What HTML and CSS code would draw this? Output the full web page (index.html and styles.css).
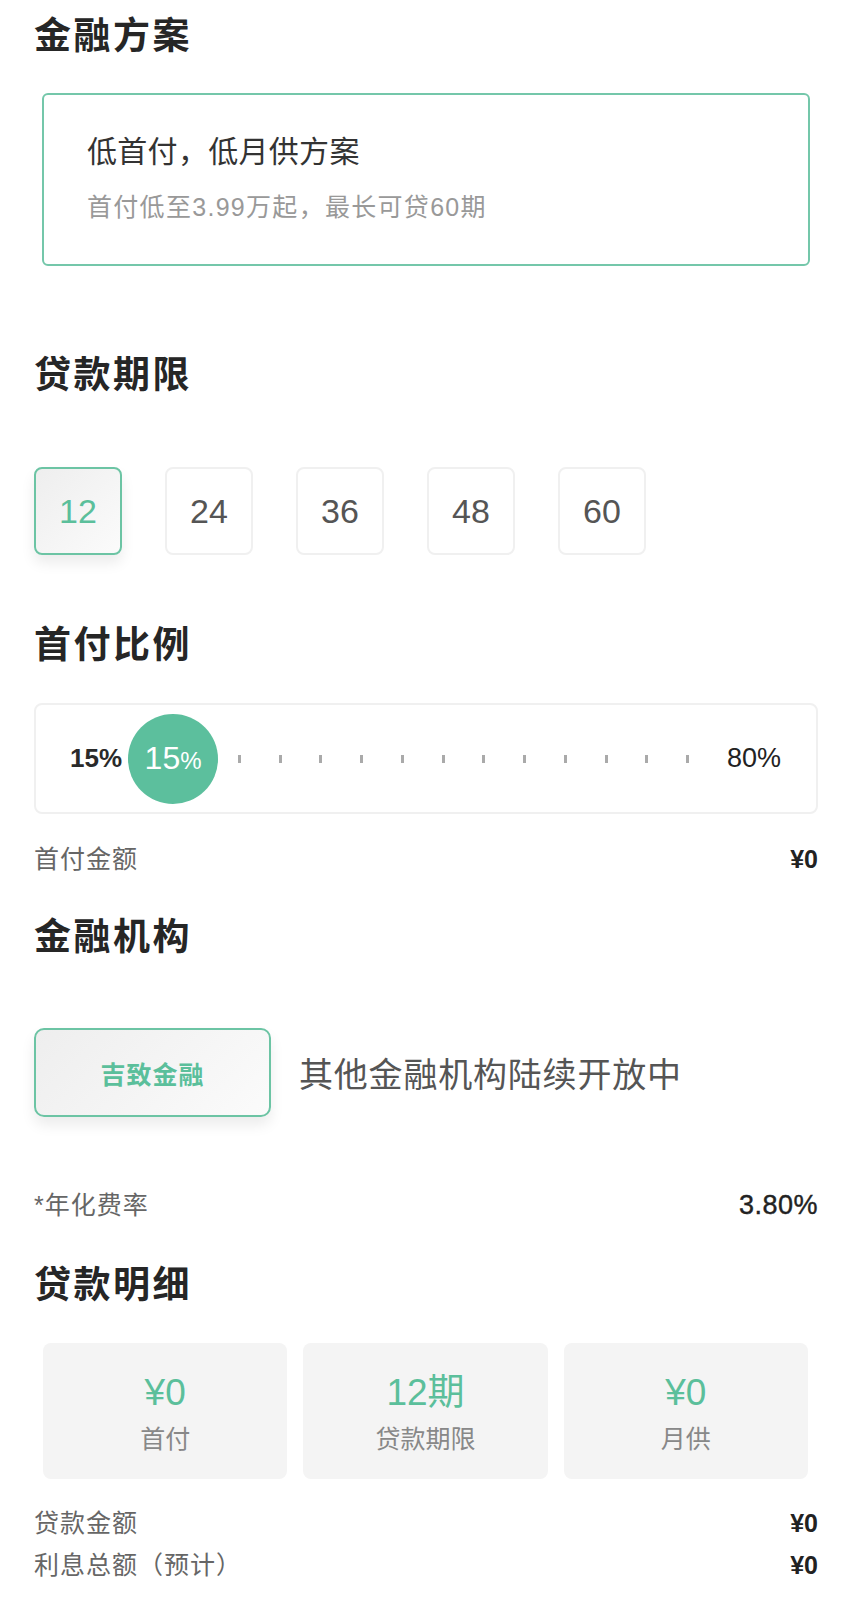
FILE: index.html
```html
<!DOCTYPE html>
<html lang="zh-CN">
<head>
    <meta charset="UTF-8">
    <meta name="viewport" content="width=device-width, initial-scale=1.0">
    <title>金融方案</title>
    <link rel="stylesheet" href="styles.css">
</head>
<body>
    <div class="page">
        <h2 class="section-title">金融方案</h2>
        <div class="plan-card">
            <div class="plan-name">低首付，低月供方案</div>
            <div class="plan-desc">首付低至3.99万起，最长可贷60期</div>
        </div>

        <h2 class="section-title title-term">贷款期限</h2>
        <div class="term-list">
            <button class="term-btn active">12</button>
            <button class="term-btn">24</button>
            <button class="term-btn">36</button>
            <button class="term-btn">48</button>
            <button class="term-btn">60</button>
        </div>

        <h2 class="section-title title-ratio">首付比例</h2>
        <div class="ratio-slider">
            <span class="ratio-min">15%</span>
            <span class="ratio-thumb">15<small>%</small></span>
            <div class="ratio-ticks">
                <i></i><i></i><i></i><i></i><i></i><i></i>
                <i></i><i></i><i></i><i></i><i></i><i></i>
            </div>
            <span class="ratio-max">80%</span>
        </div>
        <div class="info-row row-down">
            <span>首付金额</span>
            <span class="value">¥0</span>
        </div>

        <h2 class="section-title title-org">金融机构</h2>
        <div class="org-list">
            <button class="org-btn">吉致金融</button>
            <span class="org-note">其他金融机构陆续开放中</span>
        </div>
        <div class="info-row row-rate">
            <span>*年化费率</span>
            <span class="value light">3.80%</span>
        </div>

        <h2 class="section-title title-detail">贷款明细</h2>
        <div class="detail-cards">
            <div class="detail-card">
                <div class="detail-value">¥0</div>
                <div class="detail-label">首付</div>
            </div>
            <div class="detail-card">
                <div class="detail-value">12期</div>
                <div class="detail-label">贷款期限</div>
            </div>
            <div class="detail-card">
                <div class="detail-value">¥0</div>
                <div class="detail-label">月供</div>
            </div>
        </div>
        <div class="info-row row-loan">
            <span>贷款金额</span>
            <span class="value">¥0</span>
        </div>
        <div class="info-row row-interest">
            <span>利息总额（预计）</span>
            <span class="value">¥0</span>
        </div>
    </div>
</body>
</html>
```

FILE: styles.css
```css
body {
    margin: 0;
    font-family: "Liberation Sans", "Noto Sans CJK SC", sans-serif;
    background-color: #fff;
    color: #222;
}
.page {
    padding: 12px 34px 40px;
}
.section-title {
    margin: 0;
    font-size: 37px;
    line-height: 50px;
    font-weight: 700;
    letter-spacing: 2.5px;
    color: #262626;
}
.title-term {
    margin-top: 85px;
}
.title-ratio {
    margin-top: 66px;
}
.title-org {
    margin-top: 36px;
}
.title-detail {
    margin-top: 38px;
}

/* plan */
.plan-card {
    margin: 31px 8px 0;
    padding: 37px 43px 40px;
    border: 2px solid #74c7aa;
    border-radius: 6px;
}
.plan-name {
    font-size: 30px;
    line-height: 40px;
    letter-spacing: 0.3px;
    color: #333;
}
.plan-desc {
    margin-top: 18px;
    font-size: 25px;
    line-height: 34px;
    letter-spacing: 1.3px;
    color: #999;
}

/* term */
.term-list {
    display: flex;
    gap: 43px;
    margin-top: 66px;
}
.term-btn {
    width: 88px;
    height: 88px;
    padding: 0;
    font-family: inherit;
    font-size: 34px;
    color: #555;
    background-color: #fff;
    border: 2px solid #f0f0f0;
    border-radius: 8px;
}
.term-btn.active {
    color: #5bbf9b;
    border-color: #6cc4a4;
    background: linear-gradient(135deg, #eeeeee, #fbfbfb);
    box-shadow: 0 8px 14px rgba(0, 0, 0, 0.08);
}

/* ratio */
.ratio-slider {
    display: flex;
    align-items: center;
    height: 107px;
    margin-top: 32px;
    padding: 0 35px 0 34px;
    border: 2px solid #f0f0f0;
    border-radius: 8px;
}
.ratio-min {
    font-size: 26px;
    font-weight: 700;
    color: #2a2a2a;
}
.ratio-thumb {
    display: flex;
    align-items: center;
    justify-content: center;
    width: 90px;
    height: 90px;
    margin-left: 6px;
    border-radius: 50%;
    background-color: #5cbf9d;
    color: #fff;
    font-size: 32px;
}
.ratio-thumb small {
    font-size: 24px;
    margin-top: 4px;
}
.ratio-ticks {
    flex: 1;
    display: flex;
    justify-content: space-between;
    margin: 0 38px 0 20px;
}
.ratio-ticks i {
    width: 3px;
    height: 8px;
    background-color: #aaa;
}
.ratio-max {
    font-size: 27px;
    color: #222;
}

/* rows */
.info-row {
    display: flex;
    justify-content: space-between;
    font-size: 25px;
    line-height: 36px;
    letter-spacing: 1px;
    color: #666;
}
.info-row .value {
    font-weight: 700;
    letter-spacing: 0;
    color: #222;
}
.info-row .value.light {
    font-size: 27px;
    font-weight: 400;
    letter-spacing: 0.5px;
    -webkit-text-stroke: 0.4px #222;
}
.row-down {
    margin-top: 27px;
}
.row-rate {
    margin-top: 70px;
}
.row-loan {
    margin-top: 26px;
}
.row-interest {
    margin-top: 6px;
}

/* org */
.org-list {
    display: flex;
    align-items: center;
    gap: 28px;
    margin-top: 65px;
}
.org-btn {
    width: 237px;
    height: 89px;
    font-family: inherit;
    font-size: 25px;
    font-weight: 700;
    letter-spacing: 1px;
    color: #5bbf9b;
    border: 2px solid #6cc4a4;
    border-radius: 10px;
    background: linear-gradient(135deg, #eeeeee, #fbfbfb);
    box-shadow: 0 8px 14px rgba(0, 0, 0, 0.08);
}
.org-note {
    font-size: 34px;
    letter-spacing: 0.8px;
    color: #555;
}

/* detail */
.detail-cards {
    display: flex;
    gap: 16px;
    margin: 32px 10px 0 9px;
}
.detail-card {
    flex: 1;
    height: 136px;
    padding-top: 28px;
    box-sizing: border-box;
    text-align: center;
    background-color: #f4f4f4;
    border-radius: 8px;
}
.detail-value {
    font-size: 37px;
    line-height: 44px;
    color: #5bbf9b;
}
.detail-label {
    margin-top: 8px;
    font-size: 25px;
    line-height: 32px;
    color: #888;
}
```
